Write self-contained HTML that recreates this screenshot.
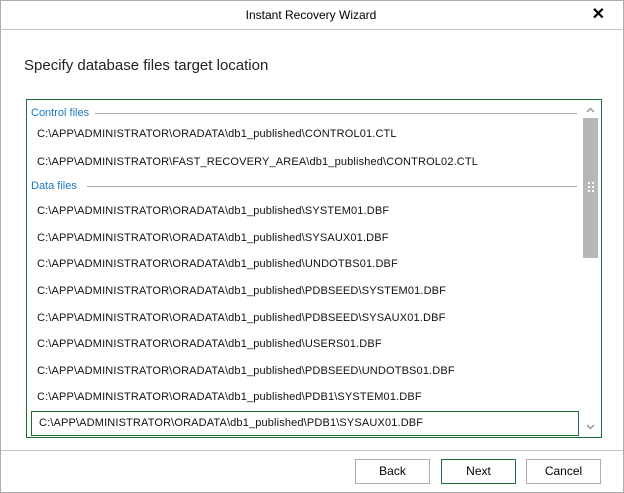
<!DOCTYPE html>
<html><head><style>
*{margin:0;padding:0;box-sizing:border-box}
body{width:624px;height:493px;background:#fff;font-family:"Liberation Sans",sans-serif;position:relative;overflow:hidden;color:#000}
.win{position:absolute;left:0;top:0;width:624px;height:493px;border:1px solid #adadad}
.title{position:absolute;top:0;left:0;width:622px;height:30px;border-bottom:1px solid #c4c4c4;text-align:center;font-size:12px;line-height:30px}
.x{position:absolute;right:17px;top:0;font-size:16px;font-weight:bold}
h1{position:absolute;left:24px;top:57px;font-size:15px;font-weight:normal;color:#222}
.list{position:absolute;left:26px;top:99px;width:576px;height:339px;border:1px solid #1f6e35}
.t{position:absolute;font-size:11px;white-space:nowrap;color:#111;letter-spacing:0.15px}
.h{position:absolute;left:4px;font-size:11px;color:#1a7ac4}
.hl{position:absolute;height:1px;background:#a8a8a8}
.thumb{position:absolute;left:556px;top:18px;width:15px;height:140px;background:#b5b8bb}
.sel{position:absolute;left:4px;top:311px;width:548px;height:25px;border:1px solid #1f6e35}
.foot{position:absolute;left:1px;top:450px;width:622px;height:1px;background:#c4c4c4}
.btn{position:absolute;top:459px;width:75px;height:25px;border:1px solid #adadad;font-size:12px;text-align:center;line-height:23px}
</style></head><body>
<div class="win"></div>
<div class="title">Instant Recovery Wizard<span class="x">✕</span></div>
<h1>Specify database files target location</h1>
<div class="list">
<div class="h" style="top:7px">Control files</div><div class="hl" style="left:68px;width:482px;top:13px"></div>
<div class="t" style="left:10px;top:28px">C:\APP\ADMINISTRATOR\ORADATA\db1_published\CONTROL01.CTL</div>
<div class="t" style="left:10px;top:56px">C:\APP\ADMINISTRATOR\FAST_RECOVERY_AREA\db1_published\CONTROL02.CTL</div>
<div class="h" style="top:80px">Data files</div><div class="hl" style="left:60px;width:490px;top:86px"></div>
<div class="t" style="left:10px;top:105px">C:\APP\ADMINISTRATOR\ORADATA\db1_published\SYSTEM01.DBF</div>
<div class="t" style="left:10px;top:132px">C:\APP\ADMINISTRATOR\ORADATA\db1_published\SYSAUX01.DBF</div>
<div class="t" style="left:10px;top:158px">C:\APP\ADMINISTRATOR\ORADATA\db1_published\UNDOTBS01.DBF</div>
<div class="t" style="left:10px;top:185px">C:\APP\ADMINISTRATOR\ORADATA\db1_published\PDBSEED\SYSTEM01.DBF</div>
<div class="t" style="left:10px;top:212px">C:\APP\ADMINISTRATOR\ORADATA\db1_published\PDBSEED\SYSAUX01.DBF</div>
<div class="t" style="left:10px;top:238px">C:\APP\ADMINISTRATOR\ORADATA\db1_published\USERS01.DBF</div>
<div class="t" style="left:10px;top:265px">C:\APP\ADMINISTRATOR\ORADATA\db1_published\PDBSEED\UNDOTBS01.DBF</div>
<div class="t" style="left:10px;top:291px">C:\APP\ADMINISTRATOR\ORADATA\db1_published\PDB1\SYSTEM01.DBF</div>
<div class="sel"></div>
<div class="t" style="left:12px;top:317px">C:\APP\ADMINISTRATOR\ORADATA\db1_published\PDB1\SYSAUX01.DBF</div>
<div class="thumb"></div>
<svg style="position:absolute;left:555px;top:0" width="17" height="337">
<path d="M5 12 L8.5 8.5 L12 12" stroke="#999" stroke-width="1.5" fill="none"/>
<path d="M5 325 L8.5 328.5 L12 325" stroke="#999" stroke-width="1.5" fill="none"/>
<g fill="#fff"><rect x="6" y="82" width="2" height="2"/><rect x="10" y="82" width="2" height="2"/><rect x="6" y="86" width="2" height="2"/><rect x="10" y="86" width="2" height="2"/><rect x="6" y="90" width="2" height="2"/><rect x="10" y="90" width="2" height="2"/></g>
</svg>
</div>
<div class="foot"></div>
<div class="btn" style="left:355px">Back</div>
<div class="btn" style="left:441px;border-color:#1f6e35">Next</div>
<div class="btn" style="left:526px">Cancel</div>
</body></html>
